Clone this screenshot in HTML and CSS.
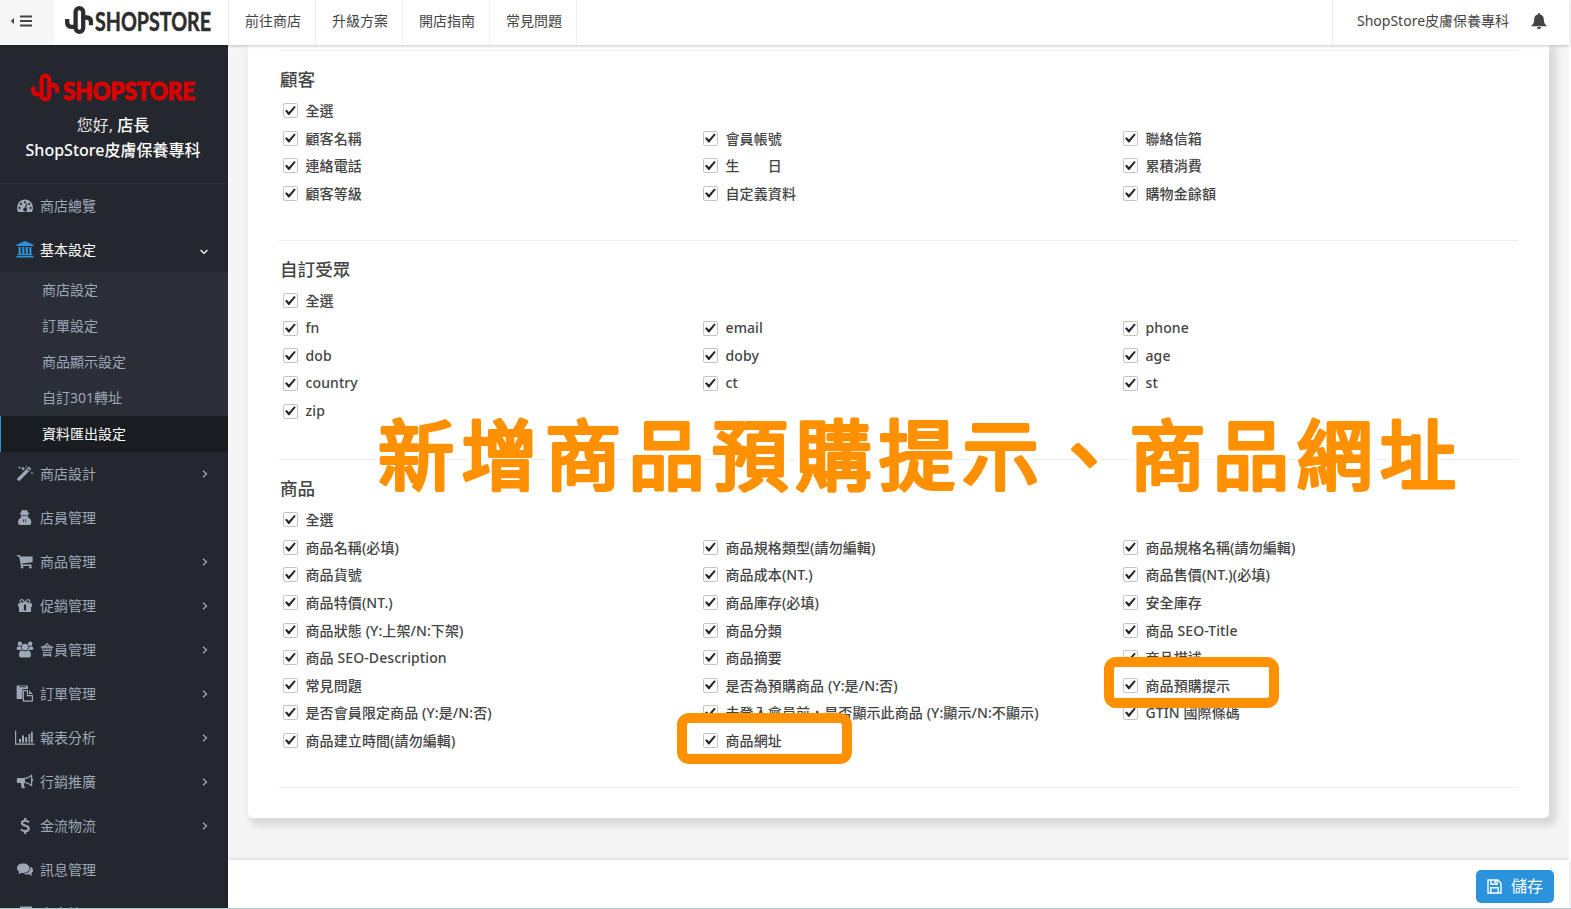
FILE: index.html
```
<!doctype html>
<html lang="zh-Hant">
<head>
    <meta charset="utf-8">
    <title>資料匯出設定</title>
    <link rel="stylesheet" href="styles.css">
</head>
<body>
<svg class="sprite">
    <symbol id="mark" viewBox="0 0 28 28">
        <g fill="none" stroke="currentColor" stroke-width="4.300">
            <rect x="10.600" y="2.200" width="7.600" height="23.600" rx="3.800"/>
            <path d="M2.200 13v3.500q0 4.300 4 4.300h4M18.500 11.500h2.500q5 0 5 4.500v3.300"/>
        </g>
    </symbol>
    <symbol id="right" viewBox="0 0 6 8"><path d="M1 .8 4.500 4 1 7.200" fill="none" stroke="currentColor" stroke-width="1.300"/></symbol>
    <symbol id="down" viewBox="0 0 8 6"><path d="M.6 1 4 4.400 7.400 1" fill="none" stroke="currentColor" stroke-width="1.300"/></symbol>
</svg>

<header class="topbar">
    <div class="toggle">
        <svg width="22" height="12" viewBox="0 0 22 12"><path d="M4 3v6L.8 6zM10 .5h12v2H10zM10 5h12v2H10zM10 9.500h12v2H10z"/></svg>
    </div>
    <div class="brand">
        <svg width="150" height="34" viewBox="0 0 150 34">
            <use href="#mark" x="0" y="1" width="28" height="28"/>
            <text class="brand-text" x="30" y="25.500" textLength="116" lengthAdjust="spacingAndGlyphs">SHOPSTORE</text>
        </svg>
    </div>
    <nav class="topnav">
        <a>前往商店</a>
        <a>升級方案</a>
        <a>開店指南</a>
        <a>常見問題</a>
    </nav>
    <div class="account">
        <span>ShopStore皮膚保養專科</span>
        <svg width="16" height="16" viewBox="0 0 16 16"><path d="M7.200 0h1.600v1.300c2.700.5 4 2.400 4 5 0 3.400 1 5 2.700 6.200v.8H.5v-.8C2.200 11.300 3.200 9.700 3.200 6.300c0-2.600 1.300-4.500 4-5zM5.800 13.900h4.400a2.200 2.100 0 0 1-4.400 0z"/></svg>
    </div>
</header>

<div class="wrap">
    <aside class="sidebar">
        <div class="profile">
            <svg width="166" height="34" viewBox="0 0 166 34">
                <use href="#mark" x="0" y="0" width="28" height="29"/>
                <text class="shop-text" x="32" y="27" textLength="132" lengthAdjust="spacingAndGlyphs">SHOPSTORE</text>
            </svg>
            <p>您好, <b>店長</b></p>
            <p><b>ShopStore皮膚保養專科</b></p>
        </div>
        <ul class="menu">
            <li>
                <svg class="icon" viewBox="0 0 18 18"><path fill-rule="evenodd" d="M9 2.500a8 8 0 0 0-8 8c0 1.800.4 3.200 1.300 4.500h13.400c.9-1.300 1.300-2.700 1.300-4.500a8 8 0 0 0-8-8zM9 4.200a1.100 1.100 0 1 1 0 2.200 1.100 1.100 0 0 1 0-2.200zM4.900 5.800a1.100 1.100 0 1 1 0 2.200 1.100 1.100 0 0 1 0-2.200zM13.100 5.800a1.100 1.100 0 1 1 0 2.200 1.100 1.100 0 0 1 0-2.200zM3.400 9.800a1.100 1.100 0 1 1 0 2.200 1.100 1.100 0 0 1 0-2.200zM14.600 9.800a1.100 1.100 0 1 1 0 2.200 1.100 1.100 0 0 1 0-2.200zM10.200 6.700l1 .3-1 3.900a2 2 0 1 1-1.100-.3z"/></svg>
                <span>商店總覽</span>
            </li>
            <li class="open">
                <svg class="icon bank" viewBox="0 0 18 18"><path d="M9 0l8.500 3.800V5H.5V3.800zM2.500 6h2.300v7h1.400V6h2.200v7h1.300V6h2.200v7h1.400V6h2.200v7h1v1.200h-15V13h1zM.5 15h17v1.500H.5z"/></svg>
                <span>基本設定</span>
                <svg class="arrow down"><use href="#down"/></svg>
            </li>
        </ul>
        <ul class="submenu">
            <li>商店設定</li>
            <li>訂單設定</li>
            <li>商品顯示設定</li>
            <li>自訂301轉址</li>
            <li class="active">資料匯出設定</li>
        </ul>
        <ul class="menu">
            <li>
                <svg class="icon" viewBox="0 0 18 18"><path d="M1.200 13.400 12.500 2.100q.5-.5 1 0l1.400 1.400q.5.5 0 1L3.600 15.800q-.5.5-1 0l-1.400-1.400q-.5-.5 0-1zM11.300 5.100l.9.900 1.600-1.700-.8-.8zM3.500.8l.4 1.300 1.300.4-1.300.4-.4 1.300-.4-1.300-1.300-.4 1.300-.4zM7 1l.7 1.900 1.900.7-1.900.7L7 6.200l-.7-1.900-1.900-.7 1.900-.7zM10.600.4l.3 1 1 .3-1 .3-.3 1-.3-1-1-.3 1-.3zM16 6.400l.3 1.200 1.200.4-1.200.4-.3 1.200-.4-1.200-1.200-.4 1.200-.4z"/></svg>
                <span>商店設計</span>
                <svg class="arrow"><use href="#right"/></svg>
            </li>
            <li>
                <svg class="icon" viewBox="0 0 18 18"><path fill-rule="evenodd" d="M6.200.8q1 0 1.500.4h1.600q.5-.4 1.500-.4 1 1.300 1.100 2.700 1.500.3 1.500.7 0 .6-1.300.9l.1 1.700q-.1 1-.6 1.700 3.400.9 3.700 4.500.2 3-2.200 3H4.200q-2.400 0-2.200-3 .3-3.600 3.500-4.500-.6-.7-.7-1.700L4.900 5.100q-1.300-.3-1.300-.9 0-.4 1.500-.7.100-1.400 1.100-2.700zM5.500 6.200q.3.900 1.500.9.900 0 1.500-.7.500.7 1.500.7 1.200 0 1.500-.9zM6.800 10l1.200 1.100-.5 3zM10.200 10l-1.200 1.100.5 3z"/></svg>
                <span>店員管理</span>
            </li>
            <li>
                <svg class="icon" viewBox="0 0 18 18"><path d="M1 2h3l.4 1.500h12.200v5.800L6 10.500l.2 1.100h9.300V13H5L3.100 3.400H1z"/><circle cx="6" cy="14.300" r="1.300"/><circle cx="14.400" cy="14.300" r="1.300"/></svg>
                <span>商品管理</span>
                <svg class="arrow"><use href="#right"/></svg>
            </li>
            <li>
                <svg class="icon" viewBox="0 0 18 18"><path fill-rule="evenodd" d="M2 6.300h4C2.700 6 3 2 5.800 2Q7.500 2 9 4.500 10.500 2 12.200 2C15 2 15.300 6 12 6.300h4v3.500h-1v5.200H3V9.800H2zM8 5.300C7 3.700 6.400 3.300 5.700 3.300c-1.300 0-1.300 2 0 2zM10 5.300h2.300c1.300 0 1.300-2 0-2-.7 0-1.300.4-2.300 2zM7.900 7.500v6h2.200v-6z"/></svg>
                <span>促銷管理</span>
                <svg class="arrow"><use href="#right"/></svg>
            </li>
            <li>
                <svg class="icon" viewBox="0 0 18 18"><circle cx="3.900" cy="2.800" r="2.200"/><circle cx="14.200" cy="2.800" r="2.200"/><circle cx="9" cy="6" r="3.300"/><path d="M2.400 5.200q1.500.8 2.700.2Q5 8 6 9H2.600Q.5 9 .6 7.500q.2-2 1.800-2.300zM15.600 5.200q-1.500.8-2.700.2Q13 8 12 9h3.400q2.100 0 2-1.500-.2-2-1.800-2.300zM6 9.200q3 2 6 0 3 .8 3 4.800 0 2.500-2 2.500H5q-2 0-2-2.500 0-4 3-4.800z"/></svg>
                <span>會員管理</span>
                <svg class="arrow"><use href="#right"/></svg>
            </li>
            <li>
                <svg class="icon" viewBox="0 0 18 18"><path fill-rule="evenodd" d="M1.200.5h10.100q.6 0 .6.600V4H7.500q-1.200 0-1.200 1.200V14H1.200q-.6 0-.6-.6V1.100q0-.6.6-.6zM3.500 1.300v1H10v-1zM7.500 5H12v5h5v6q0 .7-.7.700H7.500q-.7 0-.7-.7V5.700q0-.7.7-.7zM13 5.200 16.800 9H13zM8 6.200v9.300h7.800v-4.300H10.900v-5z"/></svg>
                <span>訂單管理</span>
                <svg class="arrow"><use href="#right"/></svg>
            </li>
            <li>
                <svg class="icon wide" viewBox="0 0 20 18"><path d="M0 1.500h1.200v13H19.500v1.200H0zM4 10h2v3.500H4zM7 6.500h2v7H7zM10.200 8.200h2v5.300h-2zM13.500 5h1.700v8.500h-1.700zM16 2.800h1.800v10.700H16z"/></svg>
                <span>報表分析</span>
                <svg class="arrow"><use href="#right"/></svg>
            </li>
            <li>
                <svg class="icon" viewBox="0 0 18 18"><path fill-rule="evenodd" d="M2 5h6q3.800 0 7.500-3.200H16.200v4q1 .3 1 1.400 0 1-1 1.400v4.700h-.7Q12 10.200 8.500 10q-1.200.8-.4 1.800-.6.900.4 1.600-.2.500.8 1.400-1.600 1-3.600.2-1-2.700-.6-4.900H2Q.8 10 .8 8.700V6.300Q.8 5 2 5zM15 3.600q-2.900 2.200-6 2.500v2.800q3.100.3 6 2.500z"/></svg>
                <span>行銷推廣</span>
                <svg class="arrow"><use href="#right"/></svg>
            </li>
            <li>
                <svg class="icon" viewBox="0 0 18 18"><path fill="none" stroke="currentColor" stroke-width="2.100" d="M13 5.300Q11.500 3.700 9.200 3.700 5.900 3.700 5.900 6q0 1.700 3.100 2.500 3.800.9 3.800 3.200 0 2.400-3.600 2.400-2.700 0-4.300-1.700M9.200.9v3M9.200 14v3"/></svg>
                <span>金流物流</span>
                <svg class="arrow"><use href="#right"/></svg>
            </li>
            <li>
                <svg class="icon" viewBox="0 0 18 18"><path d="M7.200 2.500c3.600 0 6.300 2.100 6.300 4.700s-2.700 4.700-6.300 4.700q-.9 0-1.700-.2-1.700 1.300-3.600 1.300 1-.9 1.300-2.100Q.9 9.400.9 7.200c0-2.600 2.700-4.700 6.300-4.700zM14.400 5.500q2.700 1.400 2.700 3.800 0 2-1.800 3.200.3 1.300 1.300 2.200-2 0-3.600-1.400-3.200.5-5.500-.7 7.500-.6 6.900-7.100z"/></svg>
                <span>訊息管理</span>
            </li>
            <li class="last">
                <svg class="icon" viewBox="0 0 18 18"><path d="M4 1.500h12v2h1v12H1V3h3z"/></svg>
                <span>文章管理</span>
            </li>
        </ul>
    </aside>

    <main class="main">
        <div class="content">
            <div class="card">
                <section>
                    <h3>顧客</h3>
                    <div class="fields">
                        <label class="all"><input type="checkbox" checked>全選</label>
                        <label><input type="checkbox" checked>顧客名稱</label>
                        <label><input type="checkbox" checked>會員帳號</label>
                        <label><input type="checkbox" checked>聯絡信箱</label>
                        <label><input type="checkbox" checked>連絡電話</label>
                        <label><input type="checkbox" checked>生　　日</label>
                        <label><input type="checkbox" checked>累積消費</label>
                        <label><input type="checkbox" checked>顧客等級</label>
                        <label><input type="checkbox" checked>自定義資料</label>
                        <label><input type="checkbox" checked>購物金餘額</label>
                    </div>
                </section>
                <section class="audience">
                    <h3>自訂受眾</h3>
                    <div class="fields">
                        <label class="all"><input type="checkbox" checked>全選</label>
                        <label><input type="checkbox" checked>fn</label>
                        <label><input type="checkbox" checked>email</label>
                        <label><input type="checkbox" checked>phone</label>
                        <label><input type="checkbox" checked>dob</label>
                        <label><input type="checkbox" checked>doby</label>
                        <label><input type="checkbox" checked>age</label>
                        <label><input type="checkbox" checked>country</label>
                        <label><input type="checkbox" checked>ct</label>
                        <label><input type="checkbox" checked>st</label>
                        <label><input type="checkbox" checked>zip</label>
                    </div>
                </section>
                <section class="product">
                    <svg class="headline" width="1120" height="120" viewBox="0 0 1120 120">
                        <text x="9" y="89">新增商品預購提示、商品網址</text>
                    </svg>
                    <h3>商品</h3>
                    <div class="fields">
                        <label class="all"><input type="checkbox" checked>全選</label>
                        <label><input type="checkbox" checked>商品名稱(必填)</label>
                        <label><input type="checkbox" checked>商品規格類型(請勿編輯)</label>
                        <label><input type="checkbox" checked>商品規格名稱(請勿編輯)</label>
                        <label><input type="checkbox" checked>商品貨號</label>
                        <label><input type="checkbox" checked>商品成本(NT.)</label>
                        <label><input type="checkbox" checked>商品售價(NT.)(必填)</label>
                        <label><input type="checkbox" checked>商品特價(NT.)</label>
                        <label><input type="checkbox" checked>商品庫存(必填)</label>
                        <label><input type="checkbox" checked>安全庫存</label>
                        <label><input type="checkbox" checked>商品狀態 (Y:上架/N:下架)</label>
                        <label><input type="checkbox" checked>商品分類</label>
                        <label><input type="checkbox" checked>商品 SEO-Title</label>
                        <label><input type="checkbox" checked>商品 SEO-Description</label>
                        <label><input type="checkbox" checked>商品摘要</label>
                        <label><input type="checkbox" checked>商品描述</label>
                        <label><input type="checkbox" checked>常見問題</label>
                        <label><input type="checkbox" checked>是否為預購商品 (Y:是/N:否)</label>
                        <label class="marked tip"><input type="checkbox" checked>商品預購提示</label>
                        <label><input type="checkbox" checked>是否會員限定商品 (Y:是/N:否)</label>
                        <label><input type="checkbox" checked>未登入會員前，是否顯示此商品 (Y:顯示/N:不顯示)</label>
                        <label><input type="checkbox" checked>GTIN 國際條碼</label>
                        <label><input type="checkbox" checked>商品建立時間(請勿編輯)</label>
                        <label class="marked"><input type="checkbox" checked>商品網址</label>
                    </div>
                </section>
            </div>
        </div>
        <footer class="savebar">
            <button class="save">
                <svg width="15" height="15" viewBox="0 0 15 15"><path fill="none" stroke="currentColor" stroke-width="1.400" d="M1 1h9.800L14 4.200V14H1zM4 1v4.300h6V1M3.800 14V8.800h7.400V14"/><path d="M7.300 1.500h1.700v2.700H7.300z" fill="currentColor"/></svg>
                <span>儲存</span>
            </button>
        </footer>
    </main>
</div>
</body>
</html>
```
FILE: styles.css
```
*, *::before, *::after{
    box-sizing: border-box;
}
body{
    margin: 0;
    height: 909px;
    width: 1571px;
    overflow: hidden;
    display: flex;
    flex-direction: column;
    background: #fff;
    border-bottom: 1px solid #aecbcd;
    color: #444;
    font-family: "Noto Sans", "Noto Sans CJK TC", sans-serif;
    font-size: 14px;
}
ul{
    list-style: none;
    margin: 0;
    padding: 0;
}
svg{
    fill: currentColor;
    flex: none;
}
.sprite{
    display: none;
}

/* top bar */
.topbar{
    display: flex;
    flex: none;
    width: 1569px;
    height: 45px;
    background: #fff;
    box-shadow: 0 1px 3px rgba(0,0,0,.22);
    position: relative;
    z-index: 2;
}
.toggle{
    width: 54px;
    padding: 15px 0 0 10px;
    background: #f7f7f7;
}
.toggle svg{
    display: block;
}
.brand{
    width: 175px;
    padding: 5px 0 0 11px;
    border-right: 1px solid #eee;
    color: #2d2d2d;
}
.brand svg{
    display: block;
}
.brand-text{
    font: 700 26px Lato, sans-serif;
    stroke: currentColor;
    stroke-width: .5px;
}
.topnav{
    display: flex;
}
.topnav a{
    width: 87px;
    padding-left: 2px;
    line-height: 42px;
    text-align: center;
    border-right: 1px solid #eee;
}
.account{
    margin-left: auto;
    width: 237px;
    display: flex;
    justify-content: space-between;
    padding: 0 22px 0 24px;
    line-height: 42px;
    border-left: 1px solid #eee;
}
.account svg{
    margin-top: 13px;
}

/* sidebar */
.wrap{
    display: flex;
    flex: 1;
    min-height: 0;
}
.sidebar{
    width: 228px;
    flex: none;
    overflow: hidden;
    background: #24272e;
    color: #9ea7b8;
}
.profile{
    height: 139px;
    padding-top: 28px;
    text-align: center;
    color: #e4e4e4;
    font-size: 16px;
    border-bottom: 1px solid #2e3138;
}
.profile svg{
    display: block;
    margin: 0 auto;
    color: #d80000;
}
.shop-text{
    font: 900 25px Lato, sans-serif;
    stroke: currentColor;
    stroke-width: 1.2px;
}
.profile p{
    margin: 0 0 0 -2px;
    line-height: 25px;
    white-space: nowrap;
}
.profile p:first-of-type{
    margin-top: 6px;
}
.profile b{
    font-weight: 500;
    color: #fff;
}
.menu li{
    display: flex;
    align-items: center;
    height: 44px;
    padding: 0 20px 0 16px;
}
.menu span{
    padding-bottom: 2px;
}
.icon{
    width: 18px;
    height: 18px;
    margin-right: 6px;
}
.icon.wide{
    width: 20px;
    margin: 0 5px 0 -1px;
}
.bank{
    color: #2b93dc;
}
.arrow{
    width: 6px;
    height: 8px;
    margin-left: auto;
}
.arrow.down{
    width: 8px;
    height: 6px;
    margin-top: 3px;
}
.menu .open{
    color: #fff;
}
.submenu{
    background: #2b2e37;
}
.submenu li{
    height: 36px;
    line-height: 35px;
    padding-left: 42px;
}
.submenu .active{
    padding-left: 41px;
    color: #fff;
    background: #191c20;
    border-left: 1px solid #2b93dc;
}

/* export fields */
.main{
    width: 1341px;
    display: flex;
    flex-direction: column;
    background: #f5f5f5;
}
.content{
    flex: 1;
    padding: 0 20px;
}
.card{
    height: 773px;
    padding: 5px 31px 0;
    background: #fff;
    border-radius: 0 0 5px 5px;
    box-shadow: 5px 5px 6px 3px #dadada;
}
section{
    height: 190px;
    padding-top: 15px;
    border-top: 1px solid #eee;
}
.audience{
    height: 219px;
}
.product{
    position: relative;
    height: 329px;
    border-bottom: 1px solid #eee;
}
h3{
    margin: 0;
    height: 31px;
    padding-left: 1px;
    line-height: 27px;
    font-size: 17.6px;
    font-weight: 500;
}
.fields{
    display: grid;
    grid-template-columns: 420px 420px 1fr;
    grid-auto-rows: 27.57px;
    font-weight: 500;
    letter-spacing: .1px;
}
.fields label{
    display: flex;
    align-items: center;
    position: relative;
    padding: 0 0 1px 4px;
    white-space: nowrap;
}
.fields .all{
    grid-column: 1 / 4;
}
.fields input{
    appearance: none;
    width: 15px;
    height: 15px;
    margin: 1px 7.5px 0 0;
    border: 1px solid #c4c4c4;
    border-radius: 2px;
    background: #fff;
}
.fields input::before{
    content: "";
    display: block;
    width: 11px;
    height: 10px;
    margin: 1px;
    background: #23262f;
    clip-path: polygon(0 54%, 15% 44%, 36% 66%, 84% 6%, 98% 16%, 40% 96%, 30% 96%);
}

/* notes over the page */
.marked::after{
    content: "";
    position: absolute;
    left: -22px;
    top: -14px;
    width: 175px;
    height: 51px;
    border: 10px solid #ff9100;
    border-radius: 12px;
    z-index: 1;
}
.marked.tip::after{
    left: -15px;
}
.headline{
    position: absolute;
    left: 90px;
    top: -65px;
    font-size: 76px;
    letter-spacing: 7.5px;
    font-weight: 400;
    fill: #ff9100;
    stroke: #ff9100;
    stroke-width: 4px;
    stroke-linejoin: round;
    filter: drop-shadow(3px 0 #fff) drop-shadow(-3px 0 #fff);
}

/* footer */
.savebar{
    height: 48px;
    display: flex;
    justify-content: flex-end;
    padding: 10px 15px 0 0;
    background: #fff;
    box-shadow: 0 0 4px rgba(0,0,0,.18);
}
.save{
    display: flex;
    align-items: center;
    gap: 10px;
    width: 78px;
    height: 33px;
    padding: 0 0 0 11px;
    border: 0;
    border-radius: 5px;
    background: #2b93dc;
    color: #fff;
    font: 16px "Noto Sans", "Noto Sans CJK TC", sans-serif;
    line-height: 30px;
    white-space: nowrap;
}
.save span{
    margin: -2px 0 0 -1px;
}
```
